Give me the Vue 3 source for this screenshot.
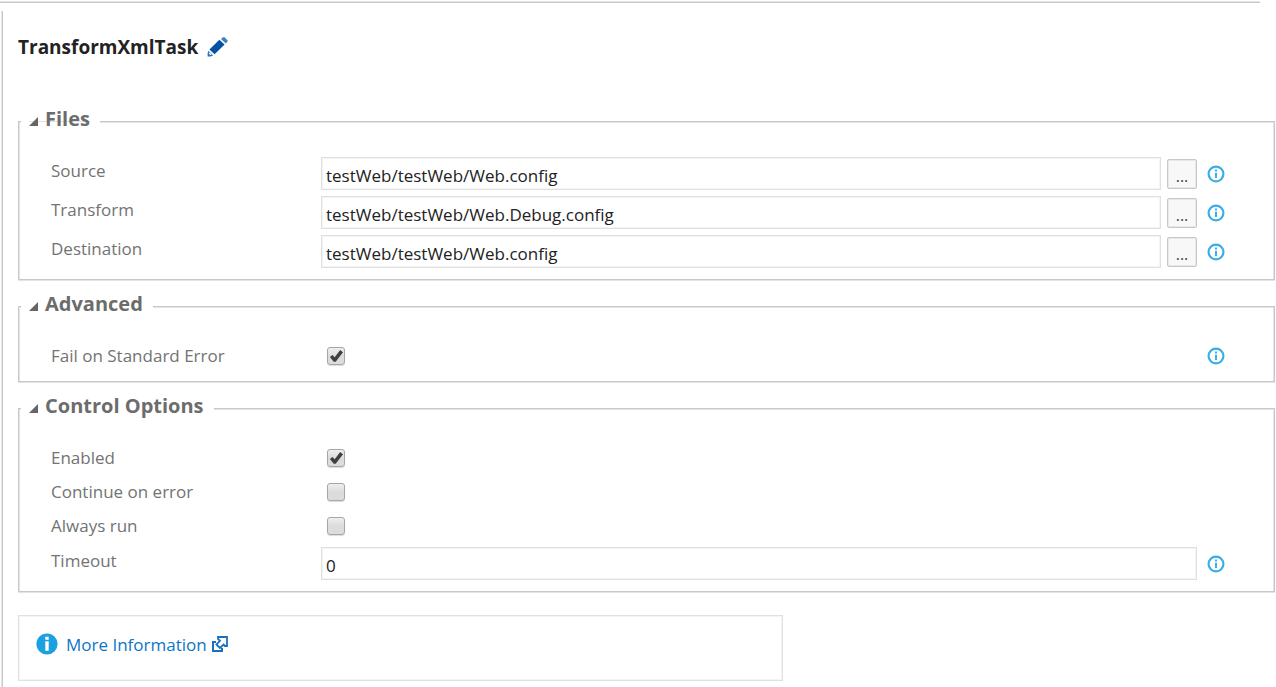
<script setup>
import { reactive } from 'vue'

const files = reactive([
  { id: 'source', label: 'Source', value: 'testWeb/testWeb/Web.config' },
  { id: 'transform', label: 'Transform', value: 'testWeb/testWeb/Web.Debug.config' },
  { id: 'destination', label: 'Destination', value: 'testWeb/testWeb/Web.config' }
])

const advanced = reactive({ failOnError: true })

const control = reactive([
  { id: 'enabled', label: 'Enabled', value: true },
  { id: 'continue', label: 'Continue on error', value: false },
  { id: 'always', label: 'Always run', value: false }
])

const timing = reactive({ timeout: '0' })
</script>

<template>
  <div class="page">
    <main class="panel">
      <header class="title">
        <h1>TransformXmlTask</h1>
        <button type="button" class="edit" aria-label="Rename task">
          <svg width="21" height="20" viewBox="0 0 21 20">
            <path d="M2.4 12.4 12.4 2.8 17.6 7.6 7.6 17.2z" fill="#0653a3" />
            <path d="M14 2 16 .3 17.6.3 20.4 3.2 20.4 4.6 18.8 6.6z" fill="#3f7fbd" />
            <path d="M1.4 13.8 6.2 18.4 3.6 19.4H.6V16.6z" fill="#2f74b7" />
            <path d="M2.2 15.2 4.8 17.6 3.4 18 1.9 16.7z" fill="#fff" />
          </svg>
        </button>
      </header>

      <fieldset class="group files">
        <legend>
          <svg class="caret" width="9" height="9" viewBox="0 0 9 9"><path d="M9 0V9H0z" fill="#666" /></svg>
          Files
        </legend>
        <div v-for="f in files" :key="f.id" class="row">
          <label :for="f.id">{{ f.label }}</label>
          <input :id="f.id" v-model="f.value" class="text" type="text" />
          <button type="button" class="browse" :aria-label="'Browse ' + f.label">...</button>
          <button type="button" class="help" :aria-label="'About ' + f.label">
            <svg width="18" height="18" viewBox="0 0 18 18">
              <circle cx="9" cy="9" r="7.4" fill="none" stroke="#3baee6" stroke-width="2.2" />
              <path d="M8 4.6h2v1.8H8zM8 7.7h2v5.2H8z" fill="#3baee6" />
            </svg>
          </button>
        </div>
      </fieldset>

      <fieldset class="group">
        <legend>
          <svg class="caret" width="9" height="9" viewBox="0 0 9 9"><path d="M9 0V9H0z" fill="#666" /></svg>
          Advanced
        </legend>
        <div class="row check">
          <label for="fail">Fail on Standard Error</label>
          <input id="fail" v-model="advanced.failOnError" type="checkbox" />
          <button type="button" class="help" aria-label="About Fail on Standard Error">
            <svg width="18" height="18" viewBox="0 0 18 18">
              <circle cx="9" cy="9" r="7.4" fill="none" stroke="#3baee6" stroke-width="2.2" />
              <path d="M8 4.6h2v1.8H8zM8 7.7h2v5.2H8z" fill="#3baee6" />
            </svg>
          </button>
        </div>
      </fieldset>

      <fieldset class="group">
        <legend>
          <svg class="caret" width="9" height="9" viewBox="0 0 9 9"><path d="M9 0V9H0z" fill="#666" /></svg>
          Control Options
        </legend>
        <div v-for="c in control" :key="c.id" class="row check">
          <label :for="c.id">{{ c.label }}</label>
          <input :id="c.id" v-model="c.value" type="checkbox" />
        </div>
        <div class="row">
          <label for="timeout">Timeout</label>
          <input id="timeout" v-model="timing.timeout" class="text" type="text" />
          <button type="button" class="help" aria-label="About Timeout">
            <svg width="18" height="18" viewBox="0 0 18 18">
              <circle cx="9" cy="9" r="7.4" fill="none" stroke="#3baee6" stroke-width="2.2" />
              <path d="M8 4.6h2v1.8H8zM8 7.7h2v5.2H8z" fill="#3baee6" />
            </svg>
          </button>
        </div>
      </fieldset>

      <aside class="more">
        <svg width="22" height="22" viewBox="0 0 22 22">
          <circle cx="11" cy="11" r="10.6" fill="#1ba1e2" />
          <path d="M9.3 3.8h3.4v3H9.3zM9.3 8.2h3.4v9.6H9.3z" fill="#fff" />
        </svg>
        <a href="#">
          More Information
          <svg width="16" height="16" viewBox="0 0 16 16" fill="none" stroke="#1a70bb">
            <path d="M4 6H1V15H10V12" stroke-width="2" />
            <path d="M6 1H15V10H13L11.6 8.6 8 12 4.4 8.4 8 4.8 6 2.8z" stroke-width="1.8" />
          </svg>
        </a>
      </aside>
    </main>
  </div>
</template>

<style>
body {
  margin: 0;
  background: #fff;
}
</style>

<style scoped>
.page {
  box-sizing: border-box;
  min-height: 100vh;
  display: flex;
  flex-direction: column;
  overflow: hidden;
  font-family: "Open Sans", "Noto Sans", sans-serif;
  font-size: 17px;
  color: #737373;
}

.page::before {
  content: "";
  height: 1px;
  margin: 1px 16px 8px 0;
  border-top: 1px solid #e4e4e4;
  background: #c8c8c8;
}

.panel {
  flex: 1;
  margin-left: 2px;
  padding: 0 1px 6px 15px;
  border-left: 1px solid #c8c8c8;
  box-shadow: -1px 0 0 #e4e4e4;
}

.title {
  display: flex;
  align-items: center;
  gap: 9px;
  height: 28px;
  padding-top: 22px;
  margin-bottom: 48px;
}

h1 {
  margin: 0;
  font-size: 19px;
  line-height: 28px;
  font-weight: 700;
  color: #222;
}

button {
  font-family: inherit;
  padding: 0;
  border: 0;
  background: none;
}

.edit,
.help {
  display: block;
}

.edit svg,
.help svg,
.more svg,
.caret {
  display: block;
}

.group {
  min-width: 0;
  margin: 14px 0 0;
  padding: 0 49px 8px 32px;
  border: 1px solid #c8c8c8;
  box-shadow: inset 1px 1px 0 #e4e4e4, inset -1px 0 0 #e4e4e4, 0 1px 0 #e4e4e4;
}

legend {
  display: flex;
  align-items: center;
  gap: 7px;
  margin-left: -30px;
  margin-bottom: 21px;
  padding: 0 10px 4px 8px;
  background: #fff;
  font-size: 20px;
  line-height: 20px;
  font-weight: 700;
  color: #6c6c6c;
}

.files {
  margin-top: 0;
}

.files legend {
  background: linear-gradient(#e4e4e4, #e4e4e4) 8px 12px / calc(100% - 18px) 1px no-repeat #fff;
}

.caret {
  margin-top: 4px;
}

.row {
  display: flex;
  align-items: center;
  height: 39px;
}

.row label {
  width: 270px;
  flex: none;
  line-height: 24px;
  padding-bottom: 6px;
}

.text {
  box-sizing: border-box;
  flex: 1;
  min-width: 0;
  height: 33px;
  padding: 3px 4px 0;
  border: 1px solid #e0e0e0;
  outline: 0;
  box-shadow: inset 0 0 0 1px #f4f4f4;
  font-family: inherit;
  font-size: 17px;
  color: #222;
}

.browse {
  box-sizing: border-box;
  width: 30px;
  height: 30px;
  margin-left: 6px;
  padding-top: 4px;
  border: 1px solid #c8c8c8;
  border-radius: 2px;
  box-shadow: inset 0 0 0 1px #e8e8e8;
  background: #f8f8f8;
  font-size: 16px;
  line-height: 20px;
  color: #444;
}

.help {
  margin-left: 10px;
}

.check {
  height: 34px;
}

.check label {
  padding-bottom: 0;
}

.check .help {
  margin-left: auto;
}

.check + .row:not(.check) {
  margin-top: 1px;
}

input[type="checkbox"] {
  appearance: none;
  box-sizing: border-box;
  width: 18px;
  height: 18px;
  margin: 0 0 0 6px;
  border: 1px solid #a6a6a6;
  border-radius: 3px;
  background: linear-gradient(#efefef, #dcdcdc 50%);
  box-shadow: 0 1px 1px #ddd;
}

input[type="checkbox"]:checked::before {
  content: "";
  display: block;
  height: 16px;
  background: #404040;
  clip-path: polygon(12% 56%, 28% 44%, 42% 58%, 76% 13%, 94% 27%, 48% 86%, 36% 86%);
}

.more {
  display: flex;
  align-items: center;
  gap: 8px;
  box-sizing: border-box;
  width: 61%;
  max-width: 765px;
  height: 66px;
  margin-top: 23px;
  padding: 0 17px 8px;
  border: 1px solid #e0e0e0;
  box-shadow: inset 0 0 0 1px #f4f4f4;
}

.more a {
  display: flex;
  align-items: center;
  gap: 5px;
  color: #0b76c6;
  text-decoration: none;
}
</style>
